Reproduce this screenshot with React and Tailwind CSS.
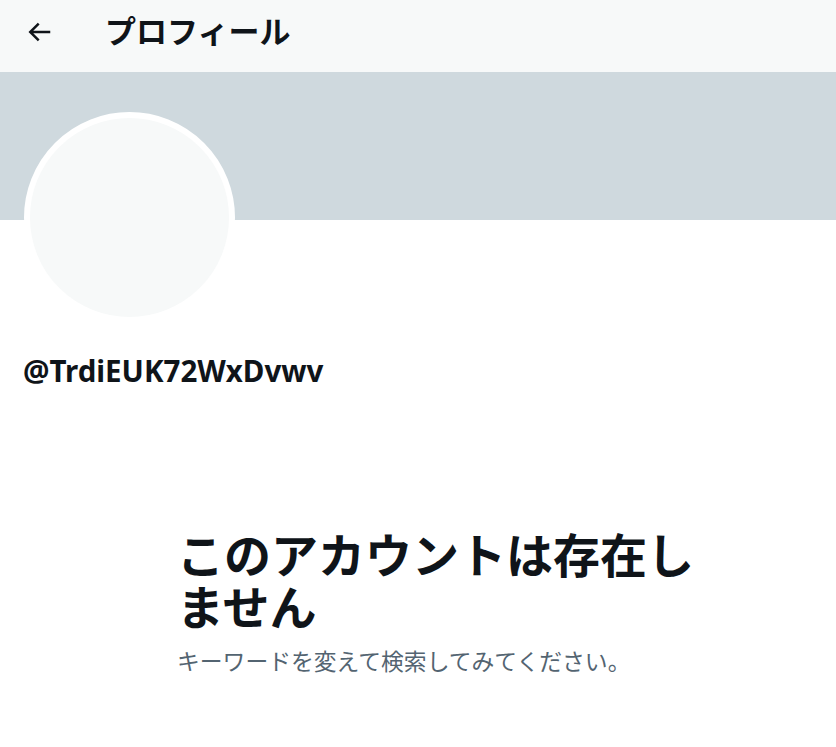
import React from 'react';

const BackArrow = () => (
  <svg viewBox="0 0 24 24" className="w-[30px] h-[30px] fill-[#0f1419]">
    <path d="M7.414 13l5.043 5.04-1.414 1.42L3.586 12l7.457-7.46 1.414 1.42L7.414 11H21v2H7.414z" />
  </svg>
);

export default function App() {
  return (
    <div className="w-[836px] h-[747px] bg-white overflow-hidden font-['Noto_Sans','Noto_Sans_CJK_JP',sans-serif]">
      {/* Header */}
      <div className="h-[72px] bg-[#f7f9f9] flex items-center pl-[24px] pb-[9px]">
        <div className="w-[30px] flex items-center">
          <BackArrow />
        </div>
        <h1 className="ml-[51px] text-[31px] font-bold text-[#0f1419] leading-none">プロフィール</h1>
      </div>

      {/* Banner */}
      <div className="h-[148px] bg-[#cfd9de]" />

      {/* Avatar */}
      <div className="px-[24px]">
        <div className="-mt-[108px] w-[211px] h-[211px] rounded-full border-[6px] border-white bg-[#f7f9f9]" />
      </div>

      {/* Username */}
      <div className="px-[23px] mt-[28px]">
        <p className="text-[29.5px] font-bold text-[#0f1419] leading-[40px]">@TrdiEUK72WxDvwv</p>
      </div>

      {/* Empty state */}
      <div className="pl-[177px] mt-[138px] w-[720px]">
        <h2 className="text-[47px] font-bold text-[#0f1419] leading-[52px] w-[530px]">このアカウントは存在しません</h2>
        <p className="mt-[14px] text-[22.8px] text-[#536471] leading-[30px]">キーワードを変えて検索してみてください。</p>
      </div>
    </div>
  );
}
